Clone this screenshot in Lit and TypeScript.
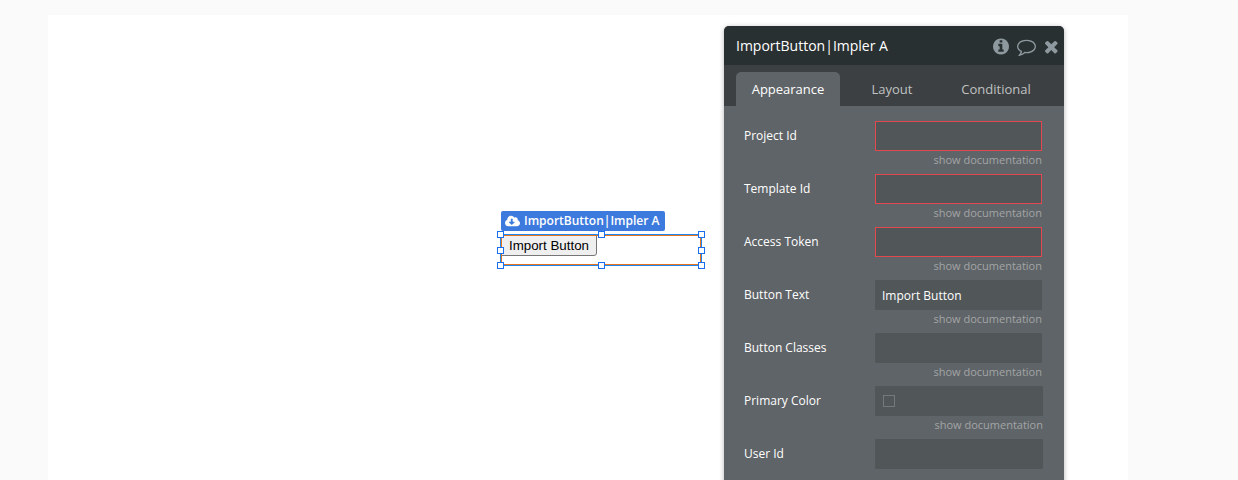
import { LitElement, html, css, nothing } from "lit";
import { customElement } from "lit/decorators.js";
import { classMap } from "lit/directives/class-map.js";

interface Field {
  label: string;
  value?: string;
  required?: boolean;
  wide?: boolean;
  swatch?: boolean;
  undocumented?: boolean;
}

const FIELDS: Field[] = [
  { label: "Project Id", required: true },
  { label: "Template Id", required: true },
  { label: "Access Token", required: true },
  { label: "Button Text", value: "Import Button" },
  { label: "Button Classes" },
  { label: "Primary Color", wide: true, swatch: true },
  { label: "User Id", wide: true, undocumented: true },
];

@customElement("property-panel")
class PropertyPanel extends LitElement {
  static styles = css`
    :host {
      display: block;
      box-sizing: border-box;
      width: 340px;
      height: 520px;
      border-radius: 5px 5px 0 0;
      overflow: hidden;
      background: #5f6468;
      box-shadow: 0 1px 5px rgba(0, 0, 0, 0.3);
      font-family: "Open Sans", sans-serif;
    }
    .header {
      display: flex;
      align-items: center;
      height: 39px;
      padding: 0 6.2px 0 12px;
      background: #293031;
      color: #fff;
      font-size: 14px;
    }
    .title { flex: 1; line-height: 20px; white-space: nowrap; }
    .icons { display: flex; align-items: center; gap: 8px; padding-top: 2px; fill: #8d999f; }
    .icons svg { display: block; height: 19px; }
    .icons .close { margin-left: 1px; }
    .tabs {
      display: flex;
      align-items: flex-end;
      height: 41px;
      padding: 0 12px;
      box-sizing: border-box;
      background: #3c4042;
    }
    .tab {
      width: 104px;
      height: 34px;
      border-radius: 5px 5px 0 0;
      line-height: 35px;
      text-align: center;
      color: #c0c2c3;
      font-size: 13px;
    }
    .active { background: #5f6468; color: #fff; }
    .fields { padding: 15px 21px 0 20px; }
    .row { display: flex; height: 53px; align-items: flex-start; }
    .label { width: 131px; color: #fff; font-size: 12px; line-height: 30px; }
    .control { width: 167px; }
    .wide { width: 168px; }
    .input {
      box-sizing: border-box;
      display: flex;
      align-items: center;
      height: 30px;
      padding: 0 7px;
      border-radius: 1px;
      background: #515659;
      color: #fff;
      font-size: 12px;
    }
    .required { border: 1px solid #e4484f; border-radius: 0; }
    .swatch { width: 10px; height: 10px; margin-left: 1px; border: 1px solid #74797c; }
    .doc { color: #a3a5a6; font-size: 11px; line-height: 18px; text-align: right; }
  `;

  render() {
    return html`
      <div class="header">
        <div class="title">ImportButton|Impler A</div>
        <div class="icons">
          <svg width="16" viewBox="0 0 1536 1792"><path d="M1024 1376v-160q0-14-9-23t-23-9h-96v-512q0-14-9-23t-23-9h-320q-14 0-23 9t-9 23v160q0 14 9 23t23 9h96v320h-96q-14 0-23 9t-9 23v160q0 14 9 23t23 9h448q14 0 23-9t9-23zm-128-896v-160q0-14-9-23t-23-9h-192q-14 0-23 9t-9 23v160q0 14 9 23t23 9h192q14 0 23-9t9-23zm640 416q0 209-103 385.5t-279.5 279.5-385.5 103-385.5-103-279.5-279.5-103-385.5 103-385.5 279.5-279.5 385.5-103 385.5 103 279.5 279.5 103 385.5z"/></svg>
          <svg width="19" viewBox="0 0 1792 1792"><path d="M896 384q-204 0-381.500 69.500t-282 187.500-104.500 255q0 112 71.500 213.500t201.500 175.500l87 50-27 96q-24 91-70 172 152-63 275-171l43-38 57 6q69 8 130 8 204 0 381.500-69.500t282-187.500 104.500-255-104.500-255-282-187.500-381.500-69.500zm896 512q0 174-120 321.500t-326 233-450 85.500q-70 0-145-8-198 175-460 242-49 14-114 22h-5q-15 0-27-10.500t-16-27.500v-1q-3-4-.5-12t2-10 4.500-9.500l6-9 7-8.500 8-9q7-8 31-34.500t34.500-38 31-39.500 32.500-51 27-59 26-76q-157-89-247.500-220t-90.500-281q0-174 120-321.500t326-233 450-85.500 450 85.500 326 233 120 321.500z"/></svg>
          <svg class="close" width="12.6" viewBox="302 0 1188 1792"><path d="M1490 1322q0 40-28 68l-136 136q-28 28-68 28t-68-28l-294-294-294 294q-28 28-68 28t-68-28l-136-136q-28-28-28-68t28-68l294-294-294-294q-28-28-28-68t28-68l136-136q28-28 68-28t68 28l294 294 294-294q28-28 68-28t68 28l136 136q28 28 28 68t-28 68l-294 294 294 294q28 28 28 68z"/></svg>
        </div>
      </div>
      <div class="tabs">
        <div class="tab active">Appearance</div>
        <div class="tab">Layout</div>
        <div class="tab">Conditional</div>
      </div>
      <div class="fields">
        ${FIELDS.map(
          (f) => html`<div class="row">
            <div class="label">${f.label}</div>
            <div class=${classMap({ control: true, wide: !!f.wide })}>
              <div class=${classMap({ input: true, required: !!f.required })}>
                ${f.swatch ? html`<span class="swatch"></span>` : nothing}${f.value ?? nothing}
              </div>
              ${f.undocumented ? nothing : html`<div class="doc">show documentation</div>`}
            </div>
          </div>`
        )}
      </div>
    `;
  }
}

@customElement("canvas-element")
class CanvasElement extends LitElement {
  static styles = css`
    :host { display: block; width: 202px; }
    .tag {
      display: flex;
      align-items: center;
      gap: 4px;
      box-sizing: border-box;
      width: 164px;
      height: 20px;
      margin-left: 1px;
      padding-left: 4px;
      border-radius: 2px;
      background: #3d7add;
      color: #fff;
      font: 600 12px/20px "Open Sans", sans-serif;
      white-space: nowrap;
    }
    .tag svg { display: block; fill: #fff; }
    .frame {
      position: relative;
      box-sizing: border-box;
      width: 202px;
      height: 32px;
      margin-top: 3px;
      border: 1px solid #1e88f0;
    }
    .outline {
      position: absolute;
      inset: 0;
      border: 1px solid #e8731f;
    }
    .button {
      display: block;
      box-sizing: border-box;
      width: 96px;
      height: 21px;
      margin: 0;
      padding: 0;
      border: 1px solid #767676;
      border-radius: 0 0 3px 0;
      background: #efefef;
      color: #000;
      font: 13.333px/19px "Liberation Sans", sans-serif;
      text-align: center;
    }
    .handle {
      position: absolute;
      box-sizing: border-box;
      width: 7px;
      height: 7px;
      border: 1px solid #1a6ff0;
      background: #fff;
    }
    .top { top: -4px; }
    .middle { top: 12px; }
    .bottom { bottom: -4px; }
    .left { left: -4px; }
    .center { left: 97px; }
    .right { right: -4px; }
  `;

  render() {
    const handles = ["top left", "top center", "top right", "middle left", "middle right", "bottom left", "bottom center", "bottom right"];
    return html`
      <div class="tag">
        <svg width="15" height="12" viewBox="0 0 640 512"><path d="M537.6 226.6c4.1-10.7 6.4-22.4 6.4-34.6 0-53-43-96-96-96-19.7 0-38.1 6-53.3 16.2C367 64.2 315.3 32 256 32c-88.4 0-160 71.6-160 160 0 2.700.1 5.400.2 8.100C40.2 219.8 0 273.2 0 336c0 79.500 64.500 144 144 144h368c70.700 0 128-57.300 128-128 0-61.900-44-113.600-102.400-125.400zm-132.900 88.700L299.300 420.700c-6.200 6.200-16.400 6.200-22.600 0L171.300 315.300c-10.100-10.100-2.900-27.300 11.300-27.300H248V176c0-8.800 7.200-16 16-16h48c8.800 0 16 7.200 16 16v112h65.400c14.200 0 21.400 17.200 11.300 27.300z"/></svg>
        <span>ImportButton|Impler A</span>
      </div>
      <div class="frame">
        <button class="button">Import Button</button>
        <span class="outline"></span>
        ${handles.map((h) => html`<span class="handle ${h}"></span>`)}
      </div>
    `;
  }
}

@customElement("app-root")
class AppRoot extends LitElement {
  static styles = css`
    :host {
      display: block;
      box-sizing: border-box;
      height: 480px;
      padding: 15px 110px 0 48px;
      overflow: hidden;
      background: #fafafa;
    }
    .page { position: relative; height: 465px; background: #fff; }
    .element { position: absolute; left: 452px; top: 196px; }
    .panel { position: absolute; left: 676px; top: 11px; }
  `;

  render() {
    return html`
      <div class="page">
        <canvas-element class="element"></canvas-element>
        <property-panel class="panel"></property-panel>
      </div>
    `;
  }
}
